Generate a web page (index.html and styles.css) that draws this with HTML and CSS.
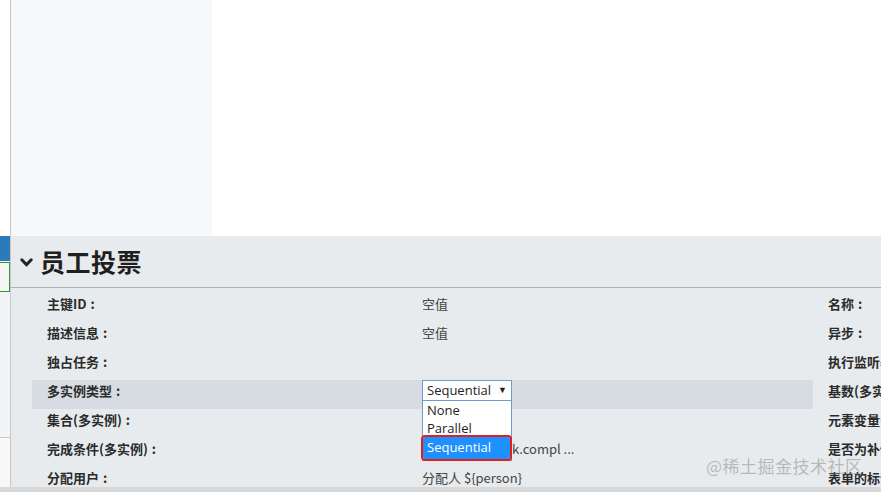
FILE: index.html
```html
<!DOCTYPE html>
<html lang="zh">
<head>
<meta charset="utf-8">
<title>员工投票</title>
<link rel="stylesheet" href="styles.css">
</head>
<body>
<div class="app">
  <aside class="strip">
    <div class="strip-blue"></div>
    <div class="strip-green"></div>
    <div class="strip-fill"></div>
    <div class="strip-rest"></div>
  </aside>
  <div class="main">
    <div class="top">
      <div class="palette"></div>
      <div class="canvas"></div>
    </div>
    <section class="props">
      <header class="props-head">
        <svg class="chev" width="13" height="9" viewBox="0 0 13 9"><polyline points="1.8,1.8 6.5,6.8 11.2,1.8" fill="none" stroke="#222" stroke-width="3" stroke-linecap="round" stroke-linejoin="round"/></svg>
        <h2 class="title">员工投票</h2>
      </header>
      <div class="tables">
        <div class="tbl tbl-left">
          <div class="row"><div class="lbl">主键ID<span class="colon">:</span></div><div class="val">空值</div></div>
          <div class="row"><div class="lbl">描述信息<span class="colon">:</span></div><div class="val">空值</div></div>
          <div class="row"><div class="lbl">独占任务<span class="colon">:</span></div><div class="val"></div></div>
          <div class="row row-hl"><div class="lbl">多实例类型<span class="colon">:</span></div>
            <div class="val">
              <div class="select-wrap">
                <div class="select"><span>Sequential</span><span class="arrow">▼</span></div>
                <div class="dropdown">
                  <div class="opt">None</div>
                  <div class="opt">Parallel</div>
                  <div class="opt opt-sel">Sequential</div>
                </div>
              </div>
            </div>
          </div>
          <div class="row"><div class="lbl">集合(多实例)<span class="colon">:</span></div><div class="val"></div></div>
          <div class="row"><div class="lbl">完成条件(多实例)<span class="colon">:</span></div><div class="val">${approvedTas<span>k.compl ...</span></div></div>
          <div class="row"><div class="lbl">分配用户<span class="colon">:</span></div><div class="val">分配人 ${person}</div></div>
        </div>
        <div class="tbl tbl-right">
          <div class="row"><div class="lbl">名称<span class="colon">:</span></div></div>
          <div class="row"><div class="lbl">异步<span class="colon">:</span></div></div>
          <div class="row"><div class="lbl">执行监听器<span class="colon">:</span></div></div>
          <div class="row"><div class="lbl">基数(多实例)<span class="colon">:</span></div></div>
          <div class="row"><div class="lbl">元素变量(多实例)<span class="colon">:</span></div></div>
          <div class="row"><div class="lbl">是否为补偿<span class="colon">:</span></div></div>
          <div class="row"><div class="lbl">表单的标识key<span class="colon">:</span></div></div>
        </div>
      </div>
      <div class="watermark">@稀土掘金技术社区</div>
    </section>
  </div>
</div>
<div class="bottombar"></div>
</body>
</html>
```
FILE: styles.css
```css
* { box-sizing: border-box; }
html, body { margin: 0; padding: 0; }
body {
  width: 881px;
  height: 492px;
  overflow: hidden;
  font-family: "Noto Sans CJK SC", "Noto Sans", sans-serif;
  color: #333;
  background: #fff;
}
.app {
  display: flex;
  height: 487px;
}
.strip {
  width: 11px;
  flex: none;
  border-right: 1px solid #c8c8c8;
  display: flex;
  flex-direction: column;
  background: #fff;
}
.strip-blue { margin-top: 236px; height: 25px; background: #2b7bbb; }
.strip-green { height: 30px; margin-top: 1px; border: 1px solid #2f9a2f; border-left: none; background: #f4f5f4; }
.strip-fill { height: 146px; background: #f3f4f5; border-bottom: 1px solid #c8c8c8; }
.strip-rest { flex: 1; background: #f8f8f8; }

.main {
  flex: 1;
  display: flex;
  flex-direction: column;
  min-width: 0;
}
.top {
  height: 236px;
  display: flex;
}
.palette { width: 201px; background: #f7f8f9; }
.canvas { flex: 1; background: #fff; }

.props {
  position: relative;
  flex: 1;
  background: #e8ebee;
  overflow: hidden;
}
.props-head {
  height: 52px;
  border-bottom: 1px solid #a9afb5;
  display: flex;
  align-items: center;
  padding-left: 9px;
  padding-bottom: 2px;
}
.chev { margin-right: 7px; margin-top: 4px; }
.title {
  margin: 0;
  font-size: 25px;
  font-weight: 700;
  color: #1f1f1f;
  letter-spacing: 0.5px;
}
.tables {
  display: flex;
  padding: 5px 0 0 21px;
}
.tbl { flex: none; }
.tbl-left { width: 781px; }
.tbl-right { width: 300px; }
.row {
  display: grid;
  grid-template-columns: 390px 1fr;
  height: 29px;
  padding-top: 1px;
  font-size: 13px;
  line-height: 19px;
}
.tbl-right .row { grid-template-columns: 1fr; }
.row-hl { background: #d6dce2; }
.lbl {
  padding-left: 15px;
  font-weight: 700;
  color: #2b2b2b;
  white-space: nowrap;
}
.colon { margin-left: 4px; }
.val {
  color: #444;
  white-space: nowrap;
  font-size: 13px;
}

.select-wrap { position: relative; width: 90px; margin-top: -1px; }
.select {
  height: 21px;
  border: 1px solid #6e9bcf;
  background: #fff;
  display: flex;
  align-items: center;
  justify-content: space-between;
  padding: 0 4px 0 4px;
  font-family: "Open Sans", "Noto Sans", sans-serif;
  font-size: 13px;
  color: #222;
}
.arrow { font-size: 9px; color: #222; margin-top: -2px; }
.dropdown {
  position: absolute;
  left: 0;
  top: 21px;
  width: 90px;
  background: #fff;
  border: 1px solid #6e9bcf;
  border-top: none;
  z-index: 2;
  font-family: "Open Sans", "Noto Sans", sans-serif;
  font-size: 13px;
  line-height: 18px;
  color: #222;
}
.opt { padding-left: 4px; height: 18px; }
.opt-sel {
  background: #1e90ff;
  color: #fff;
  height: 22px;
  line-height: 20px;
  margin: 0 1px 1px 0;
  outline: 2px solid #e02020;
  border-radius: 2px;
  padding-left: 4px;
}
.watermark {
  position: absolute;
  left: 695px;
  top: 217px;
  font-size: 17px;
  color: rgba(140, 140, 140, 0.55);
  letter-spacing: 0.5px;
  white-space: nowrap;
  pointer-events: none;
}
.bottombar {
  height: 5px;
  background: #d8d8d8;
}
```
